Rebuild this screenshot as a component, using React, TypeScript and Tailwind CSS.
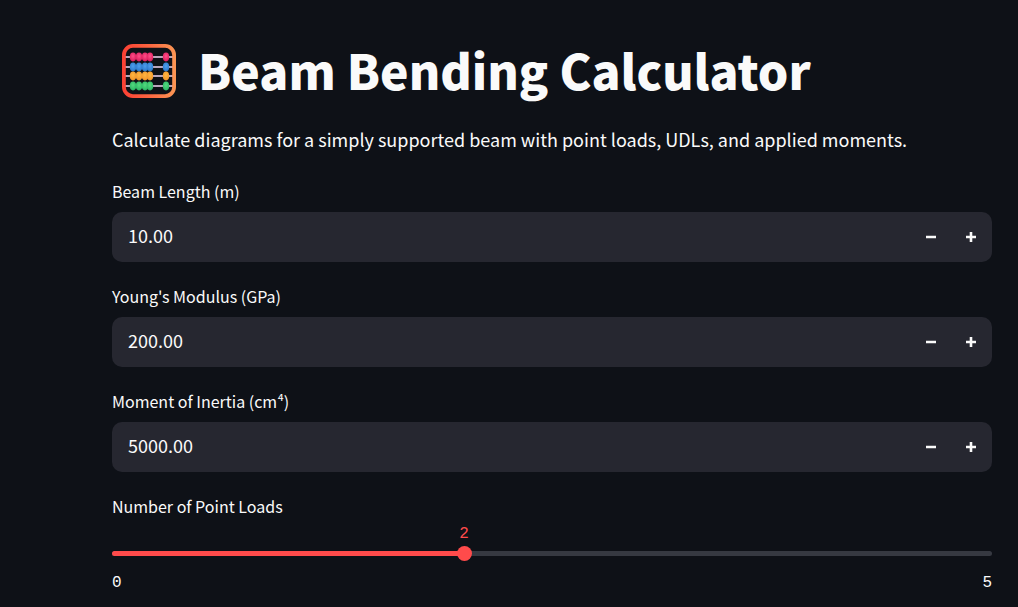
import { useId, useState } from 'react';

const beadRows = [
  { y: 13, light: '#ff4f88', dark: '#dc1c5c' },
  { y: 23, light: '#4f9eea', dark: '#2a78cc' },
  { y: 32, light: '#ffb742', dark: '#f2942a' },
  { y: 42, light: '#54d97f', dark: '#2bb763' },
];

const beadColumns = [11, 17, 23, 28, 44];

function AbacusIcon() {
  return (
    <svg viewBox="0 0 54 54" className="size-[54px] shrink-0" aria-hidden="true">
      <defs>
        <linearGradient id="frame" x1="0" y1="0" x2="1" y2="0">
          <stop offset="0" stopColor="#fb4134" />
          <stop offset="0.5" stopColor="#fc6540" />
          <stop offset="1" stopColor="#fb9453" />
        </linearGradient>
        {beadRows.map((row, i) => (
          <radialGradient key={i} id={`bead${i}`} cx="0.5" cy="0.4" r="0.6">
            <stop offset="0" stopColor={row.light} />
            <stop offset="1" stopColor={row.dark} />
          </radialGradient>
        ))}
      </defs>
      {beadRows.map((row, i) => (
        <g key={i}>
          <rect x="3" y={row.y - 1} width="48" height="2" fill="#b9a6bb" />
          {beadColumns.map((x) => (
            <ellipse key={x} cx={x} cy={row.y} rx="3.2" ry="4.4" fill={`url(#bead${i})`} />
          ))}
        </g>
      ))}
      <rect x="1.9" y="1.9" width="50.2" height="50.2" rx="9" fill="none" stroke="url(#frame)" strokeWidth="3.8" />
    </svg>
  );
}

function NumberField({ label, initial, step }: { label: string; initial: number; step: number }) {
  const id = useId();
  const [value, setValue] = useState(initial.toFixed(2));
  const change = (delta: number) => setValue((Number(value) + delta).toFixed(2));
  const buttonClass = 'flex w-10 items-center justify-center text-[#fafafa] hover:bg-[#ff4b4b]';

  return (
    <div>
      <label htmlFor={id} className="mb-[6px] block text-base leading-[30px]">
        {label}
      </label>
      <div className="flex h-[50px] overflow-hidden rounded-[10px] bg-[#262730] pr-px">
        <input
          id={id}
          type="number"
          step="any"
          value={value}
          onChange={(e) => setValue(e.target.value)}
          className="min-w-0 flex-1 appearance-none bg-transparent px-4 pb-1 text-lg leading-7 outline-none [-moz-appearance:textfield] [&::-webkit-inner-spin-button]:appearance-none"
        />
        <button type="button" aria-label={`Decrease ${label}`} onClick={() => change(-step)} className={buttonClass}>
          <svg viewBox="0 0 10 10" className="size-[10px]" fill="currentColor">
            <path d="M0 3.7h10v2.6H0z" />
          </svg>
        </button>
        <button type="button" aria-label={`Increase ${label}`} onClick={() => change(step)} className={buttonClass}>
          <svg viewBox="0 0 10 10" className="size-[10px]" fill="currentColor">
            <path d="M3.7 0h2.6v3.7H10v2.6H6.3V10H3.7V6.3H0V3.7h3.7z" />
          </svg>
        </button>
      </div>
    </div>
  );
}

function CountSlider({ label, max, initial }: { label: string; max: number; initial: number }) {
  const id = useId();
  const [value, setValue] = useState(initial);
  const percent = `${(value / max) * 100}%`;

  return (
    <div>
      <label htmlFor={id} className="block text-base leading-[30px]">
        {label}
      </label>
      <div className="relative pt-[30px]">
        <output
          htmlFor={id}
          className="absolute top-0 -translate-x-1/2 font-['Liberation_Mono',monospace] text-base leading-[26px] text-[#ff4b4b]"
          style={{ left: percent }}
        >
          {value}
        </output>
        <div className="h-[5px] overflow-hidden rounded-full bg-[#363941]">
          <div className="h-full bg-[#ff4b4b]" style={{ width: percent }} />
        </div>
        <input
          id={id}
          type="range"
          min={0}
          max={max}
          value={value}
          onChange={(e) => setValue(Number(e.target.value))}
          className="absolute -inset-x-[7px] top-[25px] h-[15px] cursor-pointer appearance-none bg-transparent outline-none [&::-webkit-slider-thumb]:size-[15px] [&::-webkit-slider-thumb]:appearance-none [&::-webkit-slider-thumb]:rounded-full [&::-webkit-slider-thumb]:bg-[#ff4b4b]"
        />
      </div>
      <div className="flex justify-between pt-4 font-['Liberation_Mono',monospace] text-base leading-[22px]">
        <span>0</span>
        <span>{max}</span>
      </div>
    </div>
  );
}

export default function App() {
  return (
    <div className="min-h-screen bg-[#0e1117] pt-[34px] pr-[26px] pl-28 font-['Noto_Sans_CJK_SC',sans-serif] text-[#fafafa]">
      <main>
        <h1 className="flex items-center gap-[22px] pl-[10px] text-5xl leading-[70px] font-black">
          <AbacusIcon />
          <span className="pb-1">Beam Bending Calculator</span>
        </h1>
        <p className="mt-4 text-lg leading-[30px]">
          Calculate diagrams for a simply supported beam with point loads, UDLs, and applied moments.
        </p>
        <form className="mt-[22px] flex flex-col gap-[19px]" onSubmit={(e) => e.preventDefault()}>
          <NumberField label="Beam Length (m)" initial={10} step={0.5} />
          <NumberField label="Young's Modulus (GPa)" initial={200} step={1} />
          <NumberField label="Moment of Inertia (cm⁴)" initial={5000} step={100} />
          <CountSlider label="Number of Point Loads" max={5} initial={2} />
        </form>
      </main>
    </div>
  );
}
